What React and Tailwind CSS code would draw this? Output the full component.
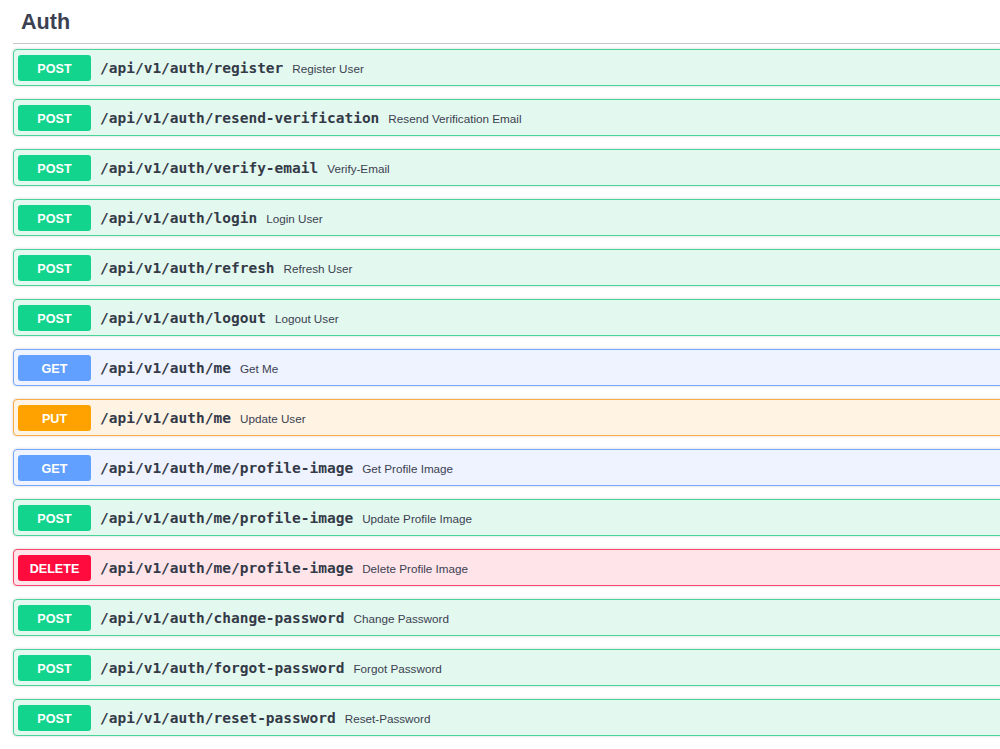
const endpoints = [
  { method: "POST", path: "/api/v1/auth/register", summary: "Register User" },
  { method: "POST", path: "/api/v1/auth/resend-verification", summary: "Resend Verification Email" },
  { method: "POST", path: "/api/v1/auth/verify-email", summary: "Verify-Email" },
  { method: "POST", path: "/api/v1/auth/login", summary: "Login User" },
  { method: "POST", path: "/api/v1/auth/refresh", summary: "Refresh User" },
  { method: "POST", path: "/api/v1/auth/logout", summary: "Logout User" },
  { method: "GET", path: "/api/v1/auth/me", summary: "Get Me" },
  { method: "PUT", path: "/api/v1/auth/me", summary: "Update User" },
  { method: "GET", path: "/api/v1/auth/me/profile-image", summary: "Get Profile Image" },
  { method: "POST", path: "/api/v1/auth/me/profile-image", summary: "Update Profile Image" },
  { method: "DELETE", path: "/api/v1/auth/me/profile-image", summary: "Delete Profile Image" },
  { method: "POST", path: "/api/v1/auth/change-password", summary: "Change Password" },
  { method: "POST", path: "/api/v1/auth/forgot-password", summary: "Forgot Password" },
  { method: "POST", path: "/api/v1/auth/reset-password", summary: "Reset-Password" },
];

// block + badge colours per method
const styles = {
  POST: { block: "bg-[#e3f8ee] border-[#49d49a]", badge: "bg-[#12d48c]" },
  GET: { block: "bg-[#eef3ff] border-[#74a8fb]", badge: "bg-[#61a0fe]" },
  PUT: { block: "bg-[#fff4e4] border-[#fcab45]", badge: "bg-[#ffa200]" },
  DELETE: { block: "bg-[#ffe4ea] border-[#f9466a]", badge: "bg-[#ff0b3e]" },
};

function Opblock({ method, path, summary }) {
  const s = styles[method];
  return (
    <div className={`flex items-center h-[37px] mb-[13px] border rounded-[4px] shadow-[0_0_3px_rgba(0,0,0,0.19)] pl-[4px] pt-[1px] ${s.block}`}>
      <span className={`w-[73px] h-[26px] flex items-center justify-center pt-[2px] rounded-[3px] text-white font-bold text-[12.6px] font-['Liberation_Sans',Arial,sans-serif] ${s.badge}`}>
        {method}
      </span>
      <span className="ml-[9px] pt-[2px] text-[14.5px] font-bold text-[#343a48] font-['DejaVu_Sans_Mono',monospace]">
        {path}
      </span>
      <span className="ml-[9px] pt-[1px] text-[11.7px] text-[#3b4151] font-['Liberation_Sans',Arial,sans-serif]">
        {summary}
      </span>
    </div>
  );
}

export default function App() {
  return (
    <div className="w-[1000px] h-[749px] overflow-hidden bg-white">
      <div className="w-[1020px] pl-[13px]">
        <h3 className="h-[44px] flex items-center pl-[8px] pt-[1px] border-b border-[#c4c6cc] text-[21.6px] font-bold text-[#3b4151] mb-[5px] font-['Liberation_Sans',Arial,sans-serif]">
          Auth
        </h3>
        {endpoints.map((e, i) => (
          <Opblock key={i} {...e} />
        ))}
      </div>
    </div>
  );
}
